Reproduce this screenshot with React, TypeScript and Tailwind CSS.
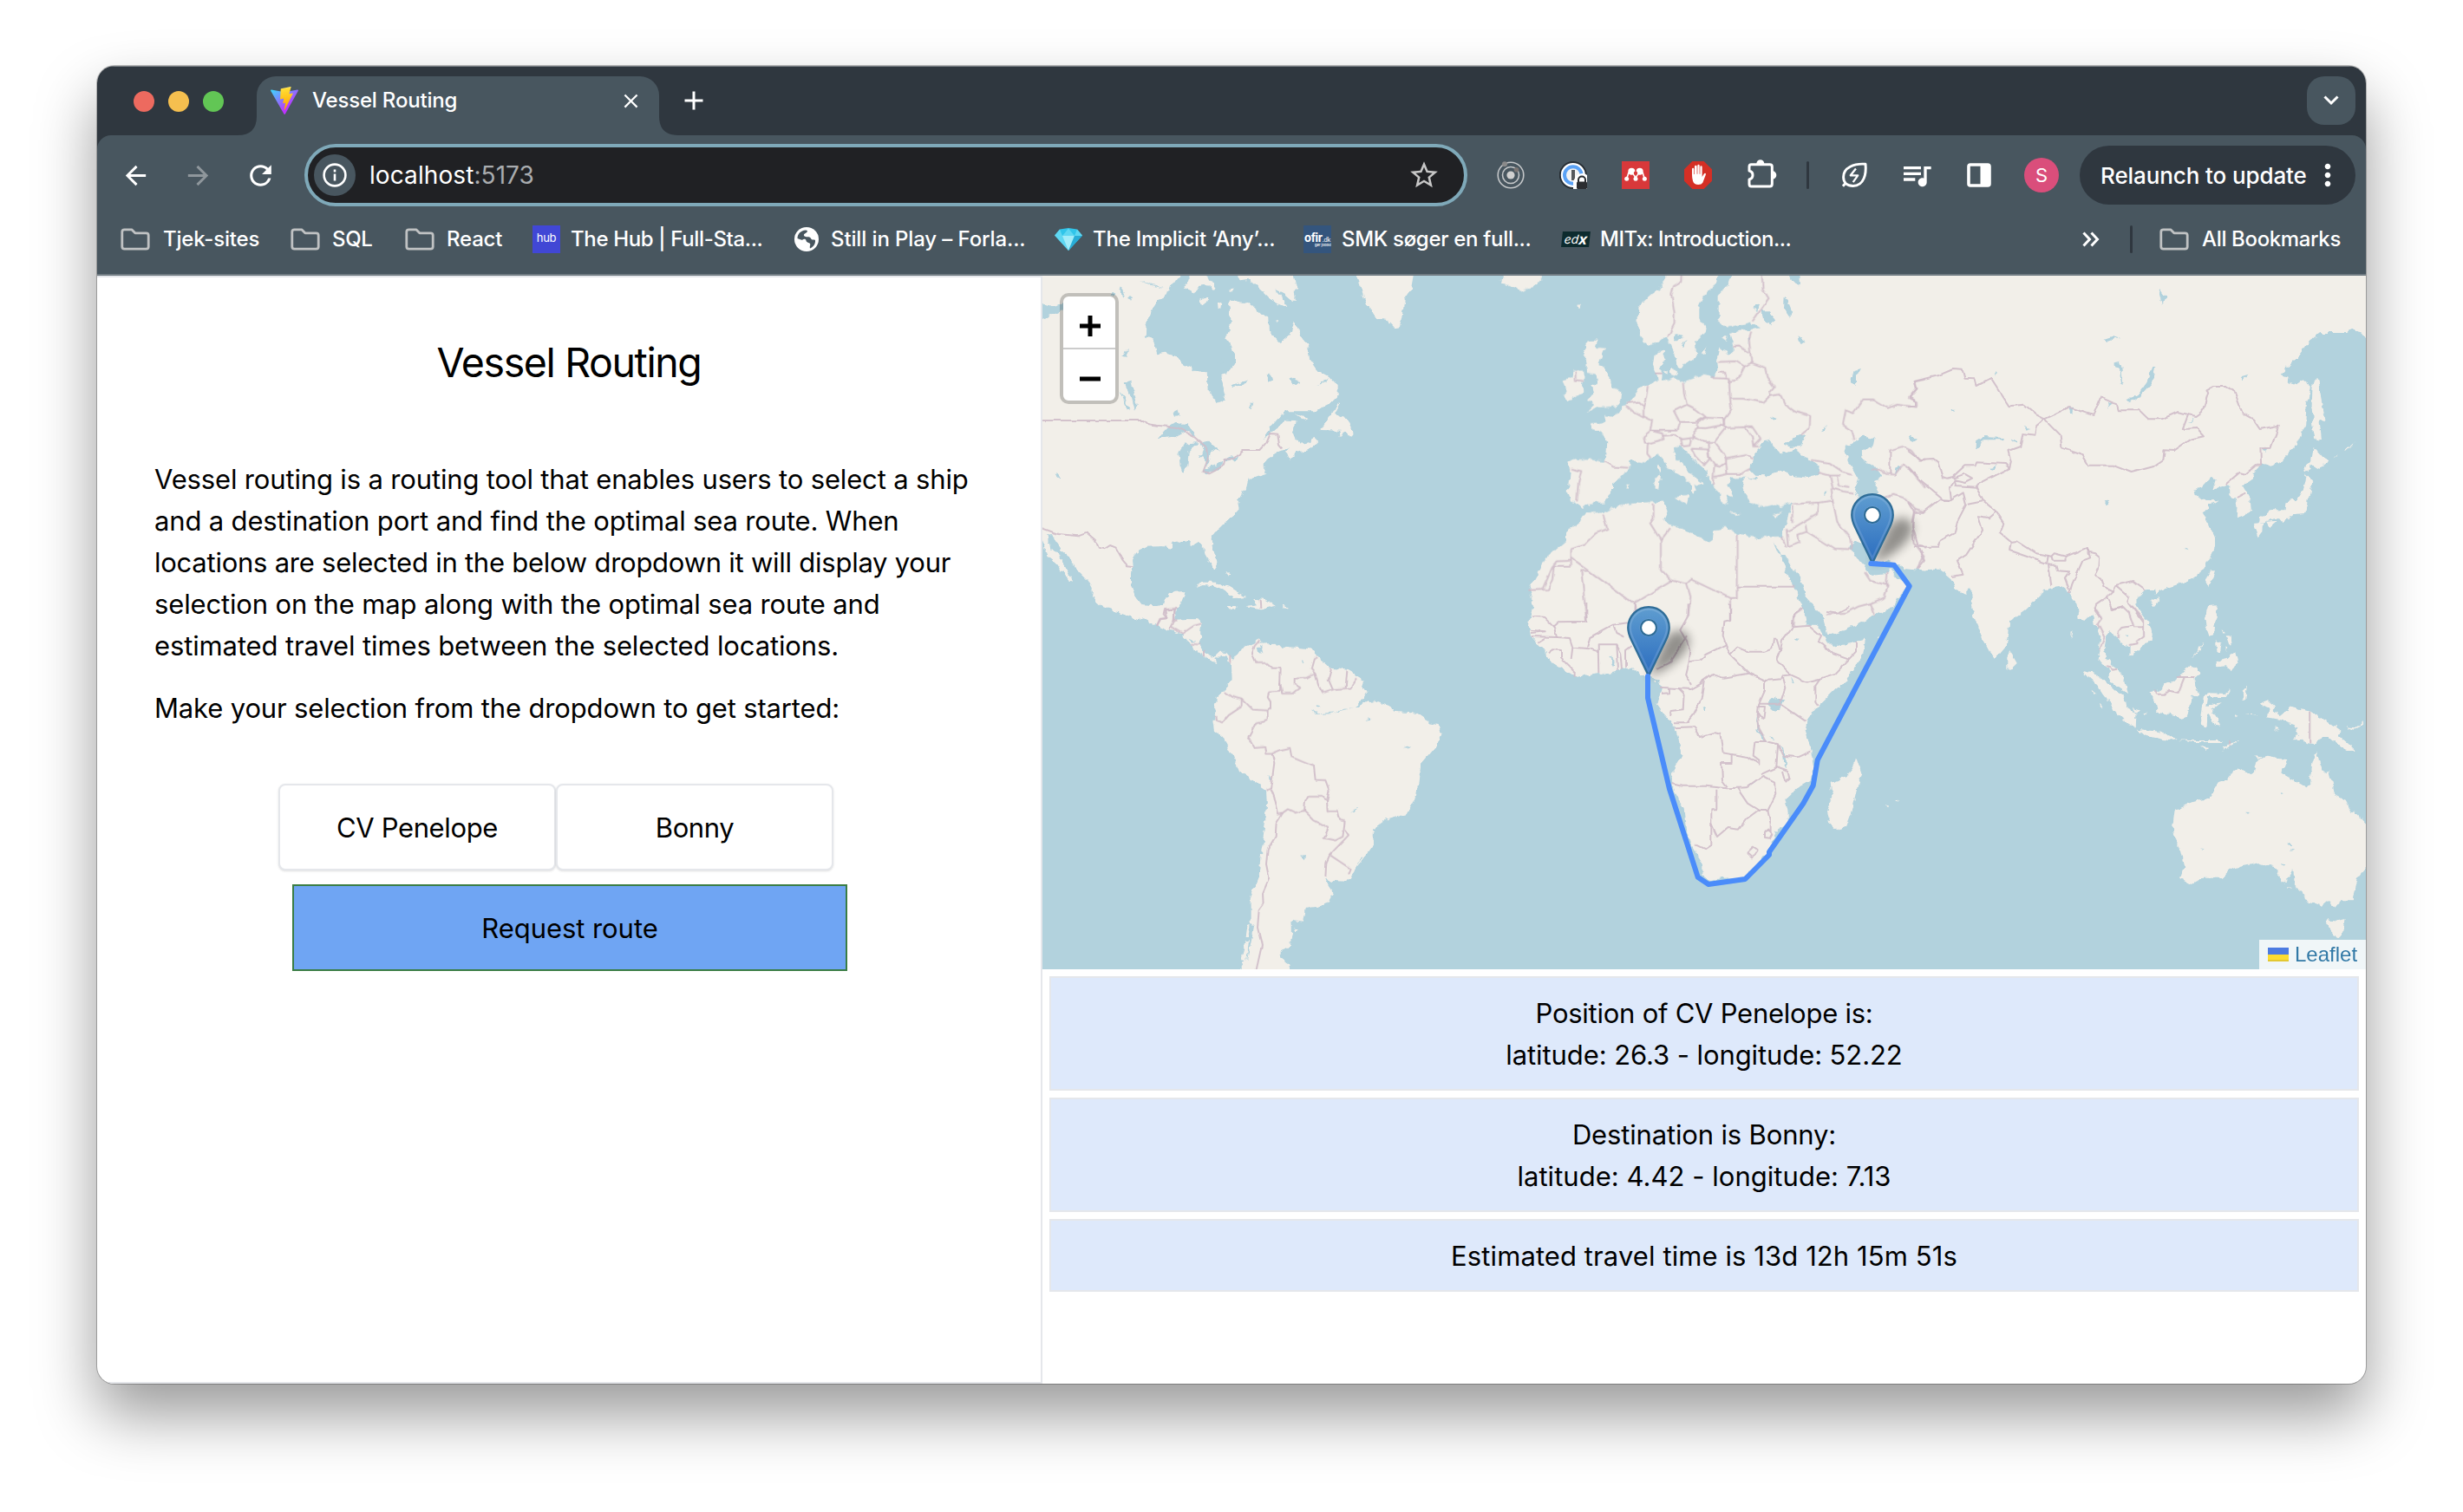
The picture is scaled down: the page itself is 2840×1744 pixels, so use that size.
import type { ReactNode } from "react";
import {
  MdAdd,
  MdArrowBack,
  MdArrowForward,
  MdClose,
  MdMoreVert,
  MdQueueMusic,
  MdRefresh,
  MdStarOutline,
} from "react-icons/md";

/* ------------------------------------------------------------------ map */

type Sheet = {
  at: string;
  land: string[];
  water: string[];
  borders: string[];
};

const northAmerica: Sheet = {
  at: "translate(1200 320) scale(.33333)",
  land: [
    "-30,-40 485,-40 480,0 470,15 445,25 432,65 405,80 380,120 365,160 362,205 388,212 403,265 430,260 468,270 490,298 530,320 575,325 578,390 612,435 632,425 638,400 622,340 650,328 672,300 672,265 655,230 640,212 655,175 658,140 648,90 660,80 700,90 722,84 740,105 765,130 790,140 792,190 830,225 862,200 877,155 900,200 925,240 930,285 955,320 1000,345 1028,375 1028,410 1010,428 985,440 955,463 900,463 845,463 815,495 790,525 775,548 815,515 850,494 880,495 880,508 868,530 880,560 900,578 930,570 945,548 957,572 925,595 880,608 858,630 850,610 860,592 830,598 785,625 772,650 783,678 745,688 718,700 712,725 700,740 690,760 682,775 686,805 668,825 640,845 600,885 590,905 592,930 605,960 612,1000 602,1014 585,990 568,960 565,930 545,920 525,925 510,912 480,912 450,918 455,935 420,930 365,932 330,950 318,975 320,1000 312,1020 312,1065 330,1110 350,1135 400,1138 425,1130 440,1095 465,1085 497,1083 490,1110 480,1135 470,1150 465,1185 500,1182 545,1184 562,1200 400,1200 360,1180 335,1185 270,1160 215,1140 180,1105 183,1085 165,1050 120,1005 100,970 72,945 50,910 40,888 22,890 30,930 65,965 85,1005 112,1052 98,1048 70,1015 55,990 25,965 18,940 6,910 -30,900",
    "670,-40 680,0 690,10 720,5 760,40 790,70 825,90 853,103 840,75 810,40 840,55 870,80 882,80 875,50 885,35 868,-40",
    "510,-40 512,15 495,38 528,57 545,30 580,25 600,45 605,36 585,10 560,-40",
    "548,78 580,65 578,82 560,96",
    "612,90 625,86 622,108 614,112",
    "650,45 670,35 668,50",
    "1080,-40 1105,30 1125,85 1160,140 1200,148 1225,175 1242,172 1250,130 1260,75 1280,45 1295,-40",
    "1028,430 1005,475 968,528 1040,530 1030,550 1055,535 1075,555 1082,535 1062,490 1035,485 1018,470 1030,435",
    "883,473 928,488 915,494",
    "538,1075 560,1055 610,1055 650,1070 712,1108 665,1110 640,1085 600,1068 560,1065",
    "735,1112 780,1116 812,1136 765,1147 708,1138 750,1132",
    "645,1138 676,1143 655,1150",
    "835,1136 859,1142 835,1147",
    "640,1015 655,1030 650,1040",
    "810,152 820,150 818,162",
  ],
  water: [
    "408,555 440,520 470,500 510,505 535,545 500,532 470,548 430,555",
    "478,605 500,575 545,570 512,600 508,650 490,677 482,650",
    "545,568 590,570 617,605 592,598 582,640 570,655 565,615 548,628 565,590",
    "560,668 625,640 632,650 575,682",
    "630,628 682,616 672,634 635,638",
    "290,365 312,360 335,440 327,458 308,405",
    "272,395 290,415 308,462 300,462",
    "-30,70 20,95 45,98 78,90 78,112 40,130 0,145 -30,140",
    "458,468 472,460 478,478 462,485",
    "50,675 62,682 68,698 55,690",
    "860,352 880,345 895,362 880,375 865,368",
    "952,372 1000,348 985,362",
    "780,340 795,330 803,350 790,362",
    "655,372 720,355 700,372 665,378",
    "720,450 735,432 728,455",
    "283,272 302,245 300,275",
    "238,60 252,48 262,60 250,68",
    "612,292 632,280 635,295 620,302",
    "340,12 375,20 430,40 400,32",
    "275,30 290,50 282,72",
    "303,65 318,72 312,84",
    "765,560 792,528 850,492 800,535",
  ],
  borders: [
    "0,495 358,495 372,508 400,512 470,518 520,545 573,590 578,630 562,672 580,676 630,650 635,630 672,626 700,597 760,597 780,575 795,540 820,542 825,580 835,592",
    "0,866 60,888 130,895 160,884 190,910 200,935 220,940 240,927 260,935 285,980 300,997 320,1000",
    "470,1140 465,1148 428,1150 425,1165 438,1180 415,1182 402,1205",
    "460,1148 460,1190",
    "758,1117 760,1146",
  ],
};

const europe: Sheet = {
  at: "translate(1700 320) scale(.33333)",
  land: [
    "90,25 100,-40 235,-40 233,5 215,25 160,47 120,30",
    "395,220 428,217 418,245 450,248 430,300 450,310 470,350 480,385 508,395 505,425 490,445 430,450 387,467 415,440 390,425 412,402 403,375 430,365 425,335 390,330 388,290 373,265 385,240",
    "343,325 378,325 383,345 372,368 376,400 322,430 303,412 320,395 308,355 340,345",
    "680,-40 650,30 600,70 568,100 565,170 575,205 605,236 640,220 665,200 680,240 700,285 705,315 722,315 727,300 755,290 768,265 765,225 800,190 803,175 775,145 775,105 795,60 840,20 850,-40",
    "900,-40 880,25 845,60 845,150 875,172 960,155 990,175 920,185 885,195 897,230 895,262 882,265 850,245 840,290 845,325 825,345 790,338 720,362 690,345 660,358 632,362 630,332 618,305 622,270 657,248 655,285 640,315 650,335 648,360 632,362 575,380 555,410 520,440 500,470 480,485 450,480 455,500 400,508 410,525 440,535 460,570 455,635 345,628 325,640 332,670 328,720 320,740 330,772 350,775 375,798 395,782 445,778 480,740 480,715 510,690 535,665 535,635 560,635 590,640 610,625 635,612 655,625 665,655 720,690 750,715 755,750 768,735 760,715 795,712 740,670 695,620 690,590 712,580 735,605 770,640 805,670 812,705 830,725 850,745 850,770 878,785 872,755 895,760 875,720 890,695 937,692 930,720 950,775 1000,795 1040,785 1060,795 1095,780 1085,830 1065,895 980,902 910,888 870,865 825,875 822,905 808,915 770,895 720,868 680,855 655,840 668,810 655,775 570,780 500,790 450,815 385,812 365,845 315,885 315,915 250,970 190,1080 205,1140 190,1200 1560,1200 1570,-40",
    "625,690 645,685 640,732 626,735",
    "630,655 642,648 640,680",
    "692,760 742,755 735,785",
    "885,812 925,818 900,822",
    "1030,820 1065,812 1045,828",
    "678,312 700,322 692,340 678,335",
    "655,322 668,320 668,335",
    "788,260 802,238 798,262",
    "855,210 875,205 870,222",
    "520,722 535,715 535,725",
    "355,92 370,90 360,110",
  ],
  water: [
    "953,665 965,620 985,595 1000,565 1025,560 1030,580 1060,610 1105,595 1150,625 1190,655 1188,680 1160,690 1110,685 1060,668 1010,685 970,683",
    "1075,575 1105,555 1150,543 1130,585 1090,588",
    "943,695 975,690 978,700",
    "1280,605 1290,580 1310,575 1345,548 1385,555 1380,580 1355,600 1340,605 1355,640 1380,650 1415,690 1383,705 1402,740 1380,765 1330,765 1315,740 1328,700 1295,640",
    "1060,960 1075,960 1130,1050 1150,1110 1205,1170 1215,1205 1150,1205 1140,1150 1110,1080 1085,1040",
    "1033,915 1055,950 1068,968 1050,955",
    "1300,930 1315,915 1350,925 1370,975 1410,988 1440,975 1455,990 1490,1005 1570,1014 1570,1205 1320,1205 1380,1172 1450,1140 1470,1105 1500,1065 1460,1035 1438,1008 1420,1030 1370,1035 1355,1005 1325,970",
    "995,115 1020,115 1042,150 1025,170 1000,150",
    "1070,65 1085,78 1102,120 1090,137 1068,105",
    "1075,-40 1125,-40 1128,28 1095,12",
    "690,220 695,195 722,200 705,220",
    "720,240 738,215 725,245",
    "1120,205 1145,220 1130,232",
    "945,205 955,205 952,230",
    "965,100 985,90 975,125",
    "1305,360 1312,325 1335,318 1320,345 1320,375",
    "1025,480 1048,490 1038,495",
    "1200,535 1220,512 1215,530",
    "1505,555 1530,560 1515,570",
    "1455,662 1480,652 1460,678",
    "1205,740 1220,740 1215,750",
  ],
  borders: [
    "718,-40 715,15 690,30 682,60 692,120 692,160 670,205",
    "993,-40 998,40 1018,72 985,120 962,152",
    "958,190 950,215 955,260 958,295 1005,312 1012,345 1037,378 1018,400 1022,410",
    "895,240 915,238 950,258",
    "842,292 905,290 935,308 958,295",
    "935,308 910,355 880,360",
    "820,348 870,350 868,330 845,328",
    "870,350 885,352 882,370 885,425 890,455 865,490 862,510",
    "885,420 930,420 1000,432 1022,410 1058,405 1075,440 1110,465 1162,480 1160,520 1130,545",
    "722,362 725,400 735,440 690,462 710,500 765,500 800,482 765,455 735,440",
    "770,505 800,485 860,488 865,510 800,522 770,520 770,505",
    "710,500 700,530 610,530",
    "585,480 615,495 608,530",
    "650,548 690,545 720,560 760,555 762,525 770,520",
    "600,375 595,410 585,445 585,485 550,465 525,442",
    "530,435 570,430 585,445",
    "610,530 585,550 590,575 600,575 655,560 650,540 610,530",
    "600,575 598,610 610,625",
    "762,550 800,570 830,570 870,520 850,508",
    "870,520 935,518 960,550 965,585 985,585",
    "935,515 960,515 990,560 965,585",
    "830,570 865,615 870,628 940,615 965,628",
    "870,628 875,680 925,680 955,662",
    "750,592 808,595 812,630 795,650 765,620 750,592",
    "715,560 720,585 745,582 750,560",
    "808,570 812,620 830,650 825,715",
    "830,650 850,655 870,640",
    "830,690 875,680",
    "450,638 480,655 535,658",
    "333,662 370,670 360,710 355,775",
    "625,332 650,332",
    "350,325 350,355 375,358",
    "1315,562 1305,530 1275,510 1285,460 1310,470 1345,422 1380,422 1430,452 1460,440 1530,448 1530,430 1503,418 1530,385 1525,360 1560,352",
    "1165,632 1230,642 1270,670 1305,680",
    "1190,675 1230,685 1270,685",
    "1230,685 1240,730 1275,740 1310,745",
    "1255,690 1260,720 1300,725",
    "1375,665 1400,662 1425,680 1455,682 1480,650 1505,660 1530,690 1560,725",
    "1438,680 1438,598 1480,585 1515,600 1540,632 1560,630",
    "1420,760 1450,752 1490,765 1525,800 1560,812",
    "1525,800 1515,840 1520,920 1560,935",
    "1520,920 1555,965 1532,1010",
    "1095,785 1195,778 1240,772 1235,730",
    "1190,780 1185,820 1100,870 1080,880",
    "1100,790 1100,850",
    "1240,772 1255,845 1300,900 1305,945",
    "1145,855 1150,880 1245,938 1300,940",
    "1080,870 1085,930 1125,915 1120,890 1150,880",
    "1065,900 1078,935",
    "1215,1165 1290,1160 1330,1138 1370,1128 1385,1170",
    "1370,1128 1418,1108 1430,1065 1370,1050 1350,1020",
    "1425,1070 1430,1020",
    "908,890 908,1070 1110,1070",
    "908,1070 908,1108 885,1110 750,1045 735,1060 680,1048 645,1010 645,910 675,870",
    "645,910 608,850 620,830 620,782",
    "445,820 460,870 420,885 380,925 335,940 335,970 545,1125 555,1125 685,1048",
    "335,970 335,998 275,998 270,1045 255,1080 190,1082",
    "335,980 285,982 270,1000 235,1080",
    "395,1015 370,1015 388,1188",
    "555,1125 555,1170",
    "735,1060 748,1105 740,1170",
    "885,1110 885,1185",
    "1105,1205 1108,1165 1135,1145",
  ],
};

const asia: Sheet = {
  at: "translate(2200 320) scale(.34439 .33333)",
  land: [
    "-15,-40 1600,-40 1600,215 1540,208 1500,182 1485,180 1470,192 1380,192 1350,215 1300,280 1248,335 1275,345 1270,360 1300,370 1320,355 1350,380 1335,440 1330,510 1300,580 1250,635 1215,650 1185,640 1160,670 1155,695 1120,720 1145,765 1150,810 1100,832 1102,790 1095,762 1078,755 1078,720 1065,718 1020,735 1030,700 1015,693 985,725 955,738 960,750 985,770 1040,772 1010,790 985,820 1005,850 1028,900 1028,930 990,1010 940,1050 895,1065 850,1080 830,1100 825,1080 795,1080 765,1110 765,1140 812,1200 625,1200 615,1160 590,1185 572,1180 565,1130 540,1095 525,1068 450,1080 445,1100 395,1150 340,1190 338,1200 235,1200 225,1170 215,1130 212,1070 190,1097 160,1080 145,1040 110,1010 0,1012 -15,1012",
    "1355,365 1370,348 1380,400 1398,495 1378,492 1385,560 1365,570 1358,530 1352,450",
    "1358,588 1385,620 1412,635 1375,662 1350,650 1330,674 1325,655 1350,635",
    "1335,685 1357,710 1337,770 1335,815 1290,820 1255,850 1240,830 1175,852 1180,830 1220,805 1262,805 1265,775 1300,770 1325,730",
    "1155,855 1188,850 1185,880 1172,898",
    "1200,845 1235,842 1210,865",
    "1010,1015 1028,1015 1008,1072 997,1050",
    "808,1118 845,1108 825,1140",
    "1005,1138 1032,1135 1037,1170 1020,1215 998,1215",
    "1420,625 1440,610 1435,618",
    "1460,600 1498,568 1475,595",
  ],
  water: [
    "820,308 829,310 815,370 770,420 735,430 728,424 765,410 800,360",
    "228,590 230,565 250,552 322,555 320,562 250,562 238,590",
    "270,658 300,652 290,664",
    "658,772 670,770 678,784 666,782",
    "690,295 708,290 714,305 722,375 714,370 708,312 690,305",
    "655,215 690,203 714,212 690,208 670,225",
    "838,45 868,65 850,95 845,70",
    "535,455 552,452 550,468 540,468",
    "668,432 678,430 672,455",
    "385,515 410,525 400,530",
    "345,555 370,570 362,575",
    "1118,345 1140,338 1122,358",
    "1192,590 1206,592 1198,606",
    "945,500 958,485 952,500",
    "5,555 28,560 15,568",
    "290,328 300,332 292,340",
    "145,458 158,458 150,466",
    "928,935 940,938 932,945",
  ],
  borders: [
    "0,448 25,445 25,430 5,415 30,385 22,360 100,340 150,318 182,320 190,350 222,352 228,375 278,348 338,445 390,440 430,475 458,490",
    "458,490 540,450 620,477 645,415 700,440 705,460 775,460 805,490 850,490 905,465 940,475 965,480 985,465 1005,400 1000,388 1025,375 1060,375 1092,392 1120,470 1155,490 1178,525 1242,512 1215,590 1180,592 1182,650 1165,650",
    "938,475 920,525 965,522 990,550 945,560 890,600 858,598 855,630 820,655 748,675 685,650 605,650 585,615 515,590 510,545 458,490",
    "458,490 428,515 425,545 385,540 375,585 335,600 345,640 340,660 325,645 230,640 225,652 190,652 150,690 130,695 115,690 100,640 85,627 40,630 0,598",
    "340,660 235,715 228,725 160,720 155,700 190,708 215,695 190,680 150,695",
    "0,655 40,700 110,760 115,770 145,770 140,730 155,705",
    "145,770 185,745 195,785 165,845 155,885 110,910 100,932 20,932",
    "0,778 20,812 50,812 105,768 145,772",
    "20,812 15,860 35,930 55,980 32,1010",
    "228,725 250,770 295,810 320,850 310,885 345,915 340,945 465,990 470,960",
    "345,915 365,912 430,955 480,965 490,955 530,965 600,935 610,970 585,980 550,1060 540,1095",
    "480,965 485,980 530,980 530,965",
    "200,785 250,775",
    "295,810 270,832 235,825 250,875 195,960 165,980 185,1028 145,1035",
    "470,990 480,1065",
    "470,995 495,995 500,1015 540,1018 525,1040 540,1080",
    "600,935 605,950 625,955 642,970 640,1000 625,1030 645,1040 655,1070 685,1085 695,1065 755,1050 795,1080",
    "685,1085 665,1105 630,1130 625,1150 645,1180",
    "665,1105 685,1150 720,1140",
    "695,1065 740,1105 735,1120 790,1195",
    "1065,715 1110,675 1130,680 1165,650",
    "1100,762 1130,745",
  ],
};

const southAmerica: Sheet = {
  at: "translate(1200 700) scale(.33333)",
  land: [
    "215,-3 270,20 335,45 360,38 400,65 440,80 485,92 520,130 525,145 560,165 590,185 610,192 603,178 625,165 645,172 650,190 660,200 662,255 640,285 612,310 600,350 608,385 595,395 600,425 630,450 680,545 690,570 780,632 783,690 775,760 760,870 755,930 725,1010 725,1090 738,1105 730,1150 715,1220 700,1230 710,1290 870,1290 858,1235 830,1215 830,1195 860,1175 870,1130 868,1082 910,1088 918,1040 960,1038 995,1025 1012,990 995,965 985,942 1010,948 1055,950 1090,905 1150,825 1152,770 1200,735 1265,718 1300,655 1315,545 1370,480 1385,440 1375,405 1345,400 1300,368 1222,362 1210,345 1155,325 1110,330 1128,298 1105,245 1060,218 1005,212 960,175 935,145 880,140 815,135 805,125 760,128 758,108 735,125 690,145 665,185 640,155 620,155 600,175 570,160 550,130 555,60 540,43 465,45 470,-3",
    "645,-3 678,-3 660,8",
    "715,1105 725,1100 718,1140 710,1140",
    "710,1160 720,1155 712,1225 692,1222",
    "690,1250 712,1235 705,1290 690,1290",
    "880,1110 893,1118 886,1128",
  ],
  water: [
    "752,140 762,135 768,155 758,162",
    "900,860 918,858 915,874",
    "787,582 802,590 800,604",
    "903,185 912,183 908,202",
    "1105,865 1115,862 1098,890",
    "515,110 530,118 528,128",
    "950,342 968,346 955,352",
    "1255,487 1282,477 1270,488",
    "1075,710 1094,694 1085,708",
    "1128,385 1138,390 1134,398",
    "1085,350 1112,318 1130,320 1100,345",
    "940,358 960,370 1035,362 1085,350 1040,358 1000,370 950,372",
  ],
  borders: [
    "465,5 430,10 435,38 412,42 402,65",
    "460,8 458,50",
    "445,78 458,50 475,45",
    "450,68 490,92 530,65 558,58",
    "520,128 550,130",
    "567,150 567,172",
    "655,170 655,192",
    "760,112 740,135 732,160 745,195 780,195 800,212 830,212 828,290",
    "828,260 835,300 870,300 895,280 878,268 878,248 920,245 950,232 935,215 945,180 958,175",
    "950,232 960,270 975,298 1015,285 1075,280 1095,250",
    "1005,215 995,250 1010,285",
    "1060,220 1055,280",
    "638,295 665,312 695,320 730,355 785,358 785,390 745,400 718,450 740,488 775,485 778,508 800,508 830,495 862,488 868,520 945,552 950,598 985,600 998,635 990,670 975,657 925,657 915,675 912,705",
    "785,358 795,355 795,325 785,310 790,292 828,290",
    "695,320 695,345 650,375 630,400 608,392 608,380",
    "800,508 808,540 800,600 795,625 782,632",
    "795,625 812,670 822,715 838,712 855,700 880,712 912,705 945,738 995,765 980,800 1020,808 1045,795 1052,742 1035,738 1028,705 992,705 990,670",
    "1052,770 1065,790 1000,858 1070,905 1062,925",
    "1000,858 988,885 985,935",
    "838,712 815,750 812,795 785,840 780,890 790,940 768,990 770,1030 755,1050 750,1110 765,1170 745,1260",
  ],
};

const africa: Sheet = {
  at: "translate(1700 700) scale(.33333)",
  land: [
    "205,-3 188,65 195,100 220,130 250,160 265,190 300,212 350,242 430,228 445,237 550,208 575,240 610,240 640,252 648,280 632,335 660,375 690,410 708,460 715,515 695,550 683,590 690,640 725,700 732,770 750,825 790,890 790,930 815,948 860,938 930,935 975,900 1015,850 1045,775 1085,750 1085,710 1075,665 1120,625 1165,600 1175,550 1168,500 1145,430 1150,395 1190,345 1250,285 1290,255 1340,170 1354,112 1320,122 1240,138 1220,120 1195,75 1160,45 1140,-3",
    "1190,-3 1210,40 1222,100 1270,85 1370,45 1450,-3",
    "1322,525 1340,580 1328,610 1310,690 1285,758 1255,772 1228,750 1220,700 1240,660 1232,610 1280,590 1305,560",
    "1422,684 1434,688 1428,694",
    "1456,670 1467,668 1462,678",
    "625,258 633,258 628,266",
    "1392,102 1402,100 1396,106",
  ],
  water: [
    "1020,325 1045,315 1072,322 1060,345 1045,362 1022,352",
    "1060,480 1068,488 1080,560 1070,545",
    "978,370 985,420 1008,462 1000,462 980,425",
    "1110,108 1124,110 1116,118",
    "945,618 970,602 955,618",
    "465,172 485,185 482,208",
    "1092,240 1108,270 1098,265",
    "1020,445 1040,462 1028,458",
    "1038,775 1060,762 1045,785",
    "788,345 798,352 793,360",
  ],
  borders: [
    "205,33 240,35 275,70 285,105 330,108 340,140 400,145 430,155",
    "388,-12 388,50 290,52 272,68",
    "195,80 245,85 195,90",
    "195,102 285,105",
    "220,125 245,110",
    "255,160 270,148 300,150 300,175 315,190 350,225 350,242",
    "340,140 335,180",
    "430,228 428,130 490,130 495,215",
    "510,215 505,160 490,130",
    "525,212 525,150 545,135",
    "390,140 400,105 480,62 530,55",
    "480,62 490,90 520,105",
    "555,-12 553,30",
    "740,-12 740,30 712,80 735,120 745,150 740,190 730,230 750,270",
    "735,100 680,190 630,215",
    "740,190 780,185 800,165 870,130 885,165 950,230",
    "885,-12 885,45 865,50 860,100 870,130",
    "885,165 910,140 945,155 1005,155 1030,145 1035,110 1045,110 1058,150 1045,182 1095,235",
    "950,230 860,245 820,232 795,250 785,265 750,285 645,278",
    "950,230 1005,255 1060,250 1070,238 1095,235 1150,260 1195,248 1250,230 1320,155 1320,120",
    "1195,248 1180,270 1180,330 1190,345",
    "1058,150 1065,115 1100,70 1105,25 1135,0",
    "1100,70 1160,65 1200,100 1190,120 1205,130",
    "1205,130 1240,162 1295,182",
    "645,300 675,298 675,280",
    "705,280 725,300 722,355 680,360 675,380",
    "795,250 785,320 755,375 735,400 690,400",
    "692,418 760,415 780,450 830,435 850,440 860,505 890,510 890,540 855,540 858,600 875,622",
    "685,612 720,620 800,620 875,628 945,625",
    "838,632 838,700 820,700 820,825 800,838 762,820",
    "820,750 840,795 875,765 915,770 940,735 980,705 1015,705 1042,650 1038,605 1000,585 945,625",
    "910,628 945,680 985,705",
    "1015,705 1025,750 1025,780",
    "1005,255 1005,290 985,335 980,370 985,420 1010,465",
    "985,335 1058,335 1145,395",
    "1058,335 1075,280 1065,245",
    "890,510 950,520 985,545 985,530 965,515 970,465 1010,465 1050,475 1045,555 990,580",
    "1050,475 1070,515 1120,520 1165,500",
    "1045,555 1085,570 1090,590 1075,605 1065,570",
    "942,852 965,830 980,840 960,868 942,852",
    "1005,780 1018,770 1030,785 1022,800 1005,798 1005,780",
    "980,345 1005,345 1000,390 980,365",
    "1215,15 1260,20 1300,0",
  ],
};

const oceania: Sheet = {
  at: "translate(2200 700) scale(.34439 .33333)",
  land: [
    "215,-3 225,45 250,110 275,160 292,182 330,135 338,90 340,45 400,-3",
    "340,150 365,195 345,215 332,210 332,180",
    "565,-3 572,42 600,38 618,20 630,60 648,110 640,150 635,175 650,195 672,215 680,260 738,300 722,240 700,215 685,205 660,170 655,140 660,105 675,85 700,105 720,130 745,140 745,170 775,145 815,120 818,90 795,40 765,-3",
    "585,222 625,230 680,275 725,315 730,345 762,370 760,415 740,412 690,360 665,315 635,275",
    "765,422 840,432 905,455 870,462 790,445",
    "812,290 850,290 860,268 890,260 945,200 980,230 960,245 962,280 975,300 950,310 935,380 910,388 895,375 835,365 830,335 815,310",
    "980,375 990,310 1005,298 1065,300 1080,290 1068,312 1005,312 1000,345 1048,330 1018,355 1045,410 1030,408 1010,370 1000,372 998,412 985,410",
    "1175,335 1205,322 1228,340 1228,365 1245,378 1285,345 1345,362 1420,405 1452,430 1440,445 1500,500 1450,485 1410,450 1385,450 1370,475 1340,472 1320,458 1288,460 1308,440 1290,405 1245,390 1205,382 1210,350",
    "1465,415 1500,418 1525,392 1528,402 1495,425",
    "1048,500 1075,472 1110,463 1062,492",
    "908,460 945,462 1050,462 1048,468 945,468",
    "978,480 1008,490 995,495",
    "1005,-3 1032,-3 1030,30 1012,60 1025,70 1022,100 1010,105 1000,75 993,40",
    "1028,190 1070,180 1095,155 1104,190 1085,220 1065,205 1035,208",
    "1030,115 1050,125 1045,155 1035,150",
    "1065,100 1080,100 1085,130 1075,130",
    "1050,75 1065,90 1055,92",
    "1060,140 1072,140 1065,155",
    "948,178 988,125 980,145",
    "1120,290 1135,275 1130,320 1122,320",
    "1128,372 1172,378 1150,372",
    "1095,372 1112,378 1100,382",
    "1230,410 1238,420 1230,435",
    "752,348 775,355 762,368",
    "790,362 800,366 794,372",
    "617,290 630,300 622,302",
    "642,335 652,345 645,348",
    "545,85 550,85 543,112",
    "1165,535 1185,520 1205,515 1270,530 1250,575 1335,625 1345,610 1355,540 1367,500 1388,565 1410,575 1430,650 1465,670 1485,710 1500,715 1540,760 1600,790 1600,850 1540,895 1510,930 1490,1000 1490,1015 1450,1015 1430,1040 1408,1018 1385,1037 1330,1015 1320,985 1295,965 1290,910 1275,940 1255,955 1225,900 1180,885 1110,900 1075,910 1050,935 990,935 950,960 912,938 925,900 912,845 885,770 893,705 940,680 1010,660 1035,615 1045,608 1070,600 1080,575 1112,557 1130,575 1155,575",
    "1162,518 1185,515 1175,524",
    "1402,1080 1430,1088 1462,1080 1455,1130 1438,1147 1415,1120",
    "1268,972 1290,975 1275,978",
  ],
  water: [
    "1130,710 1148,711 1138,716",
    "1270,815 1288,820 1280,828",
    "1278,838 1290,842 1280,845",
    "1250,885 1265,890 1255,894",
    "980,838 992,840 985,845",
    "722,92 738,100 730,104",
    "1248,643 1257,645 1250,649",
  ],
  borders: [
    "622,0 648,40 635,60 658,105 642,150",
    "680,0 682,12 720,0 740,20 755,65 715,72 705,85 705,105",
    "750,-3 790,45 790,100 765,120 765,130 740,135",
    "755,70 790,70",
    "665,205 680,208 685,218 700,215",
    "825,290 830,302 860,302 875,290 905,297 925,245",
    "900,243 960,243",
    "1345,362 1345,472",
    "1075,465 1080,480",
  ],
};

const sheets = [northAmerica, southAmerica, africa, europe, oceania, asia];

const route =
  "1900,780 1900,805 1925,910 1957.7,1011.7 1970,1020 2012.3,1014 2040,986 2040,982.7 2079.3,926.7 2090.7,906 2095.7,876.7 2201.7,676 2184,651.7 2157.3,650";

function Marker({ x, y }: { x: number; y: number }) {
  return (
    <g transform={`translate(${x - 25} ${y - 80}) scale(2)`}>
      <path d="M12.5 40.5 22 19q7-8 12-3t-4 14q-7 7-17.5 10.5z" fill="#000" opacity=".4" filter="url(#soft)" />
      <path
        d="M12.5.6C5.9.6.6 5.9.6 12.5c0 2.6.9 5 2 7.3L12.5 40.4l9.9-20.6c1.1-2.3 2-4.7 2-7.3C24.4 5.9 19.1.6 12.5.6z"
        fill="url(#pin)"
        stroke="#2e6c97"
        strokeWidth="1.1"
      />
      <path
        d="M12.5 1.9C6.6 1.9 1.9 6.6 1.9 12.5c0 2.4.8 4.6 1.9 6.8L12.5 37.5l8.7-18.2c1.1-2.2 1.9-4.4 1.9-6.8C23.1 6.600 18.4 1.9 12.5 1.9z"
        fill="none"
        stroke="#fff"
        strokeOpacity=".13"
        strokeWidth="1.2"
      />
      <circle cx="12.5" cy="12.5" r="5.3" fill="#fff" fillOpacity=".15" />
      <circle cx="12.5" cy="12.5" r="4.5" fill="#fff" stroke="#2e6c97" strokeWidth="1.1" />
    </g>
  );
}

function WorldMap() {
  return (
    <svg viewBox="1202 318 1526 800" className="block h-[800px] w-[1526px]">
      <defs>
        <filter id="coast" filterUnits="userSpaceOnUse" x="1180" y="300" width="1570" height="840">
          <feTurbulence type="fractalNoise" baseFrequency=".13" numOctaves="2" seed="4" />
          <feDisplacementMap in="SourceGraphic" scale="7" xChannelSelector="R" yChannelSelector="G" result="d" />
          <feGaussianBlur in="d" stdDeviation=".6" />
        </filter>
        <filter id="frontier" filterUnits="userSpaceOnUse" x="1180" y="300" width="1570" height="840">
          <feTurbulence type="fractalNoise" baseFrequency=".1" numOctaves="1" seed="4" />
          <feDisplacementMap in="SourceGraphic" scale="5" xChannelSelector="R" yChannelSelector="G" result="d" />
          <feGaussianBlur in="d" stdDeviation=".4" />
        </filter>
        <filter id="soft" x="-40%" y="-40%" width="180%" height="180%">
          <feGaussianBlur stdDeviation="2.8" />
        </filter>
        <linearGradient id="pin" x1="0" y1="0" x2="0" y2="1">
          <stop offset="0" stopColor="#5f9dd0" />
          <stop offset="1" stopColor="#2a6cbf" />
        </linearGradient>
      </defs>
      <rect x="1180" y="300" width="1570" height="840" fill="#b2d2dd" />
      <g filter="url(#coast)">
        {sheets.map((s) => (
          <g key={s.at} transform={s.at} fill="#f2efe9">
            {s.land.map((p) => (
              <polygon key={p} points={p} />
            ))}
          </g>
        ))}
        {sheets.map((s) => (
          <g key={s.at} transform={s.at} fill="#b2d2dd">
            {s.water.map((p) => (
              <polygon key={p} points={p} />
            ))}
          </g>
        ))}
      </g>
      <g filter="url(#frontier)">
        {sheets.map((s) => (
          <g key={s.at} transform={s.at} fill="none" stroke="#cfbdc9" strokeOpacity=".9" strokeWidth="6" strokeLinejoin="round">
            {s.borders.map((p) => (
              <polyline key={p} points={p} />
            ))}
          </g>
        ))}
      </g>
      <Marker x={2159} y={649} />
      <Marker x={1901} y={779} />
      <polyline points={route} fill="none" stroke="#4a8cfa" strokeWidth="6" strokeLinecap="round" strokeLinejoin="round" />
    </svg>
  );
}

/* --------------------------------------------------------------- chrome */

function ViteLogo() {
  return (
    <svg viewBox="0 0 256 257" className="size-8">
      <defs>
        <linearGradient id="va" x1="-.8%" x2="57.6%" y1="7.6%" y2="78.4%">
          <stop offset="0" stopColor="#41d1ff" />
          <stop offset="1" stopColor="#bd34fe" />
        </linearGradient>
        <linearGradient id="vb" x1="43.4%" x2="50.3%" y1="2.2%" y2="89%">
          <stop offset="0" stopColor="#ffea83" />
          <stop offset=".083" stopColor="#ffdd35" />
          <stop offset="1" stopColor="#ffa800" />
        </linearGradient>
      </defs>
      <path
        fill="url(#va)"
        d="M255.153 37.938L134.897 252.976c-2.483 4.44-8.862 4.466-11.382.048L.875 37.958c-2.746-4.814 1.371-10.646 6.827-9.67l120.385 21.517a6.537 6.537 0 0 0 2.322-.004l117.867-21.483c5.438-.991 9.574 4.796 6.877 9.62Z"
      />
      <path
        fill="url(#vb)"
        d="M185.432.063L96.44 17.501a3.268 3.268 0 0 0-2.634 3.014l-5.474 92.456a3.268 3.268 0 0 0 3.997 3.378l24.777-5.718c2.318-.535 4.413 1.507 3.936 3.838l-7.361 36.047c-.495 2.426 1.782 4.5 4.151 3.78l15.304-4.649c2.372-.72 4.652 1.36 4.15 3.788l-11.698 56.621c-.732 3.542 3.979 5.473 5.943 2.437l1.313-2.028l72.516-144.72c1.215-2.423-.88-5.186-3.54-4.672l-25.505 4.922c-2.396.462-4.435-1.77-3.759-4.114l16.646-57.705c.677-2.35-1.37-4.583-3.769-4.113Z"
      />
    </svg>
  );
}

function Slot({ children }: { children: ReactNode }) {
  return <div className="flex w-[72px] shrink-0 items-center justify-center">{children}</div>;
}

function Orbit() {
  return (
    <svg viewBox="0 0 32 32" className="size-8" fill="none" stroke="#c4c7c9" strokeWidth="1.6">
      <circle cx="16" cy="16" r="14.8" />
      <circle cx="16" cy="16" r="9.5" />
      <circle cx="16" cy="16" r="4.6" fill="#d0d0d0" stroke="none" />
      <circle cx="9" cy="3.3" r="3" fill="#8a8a8a" stroke="none" />
      <circle cx="22.5" cy="9.7" r="2.8" fill="#7c7674" stroke="none" />
    </svg>
  );
}

function OnePassword() {
  return (
    <svg viewBox="0 0 32 32" className="size-8">
      <circle cx="15.8" cy="16" r="15" fill="#fff" stroke="#262d33" strokeWidth="2" />
      <circle cx="15.8" cy="16" r="9.8" fill="#f2f2f2" stroke="#5ba2f5" strokeWidth="4" />
      <rect x="14" y="10" width="4" height="12" fill="#55585c" />
      <path d="M16 32V23l4-7q8-4 12 0v16z" fill="#fff" />
      <path d="M22 24v-2.5a4 4 0 0 1 8 0V24" fill="none" stroke="#262a2e" strokeWidth="2" />
      <rect x="20" y="23.5" width="12" height="8.5" rx="1.5" fill="#2c2e31" />
    </svg>
  );
}

function Mendeley() {
  return (
    <svg viewBox="0 0 96 96" className="size-8 bg-[#d8383a]" fill="#fff">
      <path d="M24 38q-3 14-8 22M72 38q3 14 8 22M40 44q6 8 8 16M56 44q-6 8-8 16" stroke="#fff" strokeWidth="5" fill="none" />
      <circle cx="34" cy="35" r="12" />
      <circle cx="62" cy="35" r="12" />
      <circle cx="48" cy="41" r="6.5" fill="#d8383a" />
      <circle cx="17" cy="61" r="7.5" />
      <circle cx="79" cy="61" r="7.5" />
      <circle cx="48" cy="61" r="7.5" />
    </svg>
  );
}

function AdBlock() {
  return (
    <svg viewBox="0 0 96 96" className="size-8">
      <path d="M28 0h40l28 28v40L68 96H28L0 68V28z" fill="#d42f25" />
      <path
        d="M27 48V27q0-4 3.5-4t3.5 4v18h2V18q0-4 4-4t4 4v26h2V15q0-4 3.500-4t3.500 4v29h2V20q0-4 3.500-4t3.500 4v34l6-10q3-4 6-2 2 2 0 6L64 74q-4 7-15 7-15 0-19-13-3-10-3-20z"
        fill="#fff"
      />
    </svg>
  );
}

function Puzzle() {
  return (
    <svg viewBox="936 68 114 114" className="size-[38px] translate-x-px">
      <path
        d="M958 88h64q8 0 8 8v60q0 8-8 8h-64q-7 0-7-8v-16q12-3 12-15t-12-15V96q0-8 7-8z"
        fill="none"
        stroke="#fff"
        strokeWidth="9"
        strokeLinejoin="round"
      />
      <path d="M976 86a13 14 0 0 1 27 0zM1032 111a13 14 0 0 1 0 28z" fill="#fff" />
    </svg>
  );
}

function EnergyLeaf() {
  return (
    <svg viewBox="1264 78 98 98" className="size-8" fill="none" stroke="#fff" strokeWidth="9" strokeLinejoin="round">
      <path d="M1353 88c-40-3-78 12-78 46 0 20 14 31 34 31 40 0 47-45 44-77zM1284 154l-11 12" />
      <path d="m1319 104-19 24h26l-17 24" strokeWidth="7" />
    </svg>
  );
}

function SidePanel() {
  return (
    <svg viewBox="0 0 28 28" className="size-7">
      <rect x="2" y="2" width="24" height="24" rx="2" fill="none" stroke="#fff" strokeWidth="3.6" />
      <path d="M15.5 2H26v24H15.5z" fill="#fff" />
    </svg>
  );
}

function Folder() {
  return (
    <svg viewBox="0 0 34 26" className="h-[26px] w-[34px]" fill="none" stroke="#c0c2c3" strokeWidth="2.8" strokeLinejoin="round">
      <path d="M1.8 4.5q0-2.7 2.7-2.7h8.3l4 4h12.7q2.7 0 2.7 2.7v13q0 2.7-2.7 2.7H4.5q-2.7 0-2.7-2.7z" />
    </svg>
  );
}

function Globe() {
  return (
    <svg viewBox="0 0 28 28" className="mx-0.5 size-7">
      <circle cx="14" cy="14" r="14" fill="#fff" />
      <path d="M13 3.5c4 .5 1 3-1 4s-1 3 1 3.5 5-.5 6 2 4 1 5 2c.5 5-3 8.500-6 9.500-1-2 1-4 0-5.500s-4-1-4.500-3.500c0-2-3-2-4-1s-4-1-6-1.500C3.500 8 7 4 13 3.500z" fill="#48565f" />
    </svg>
  );
}

function Diamond() {
  return (
    <svg viewBox="0 0 32 26" className="h-[26px] w-8">
      <path d="M6 1.5 16 0l10 1.5 6 7L16 26 0 8.5z" fill="#31c5ea" />
      <path d="M6 1.5 9 9l7-8.5L23 9l3-7.5 6 7L16 26 0 8.5z" fill="#7fe3f7" opacity=".6" />
      <path d="M9 9h14l-7 17z" fill="#b9f3fb" opacity=".75" />
      <path d="M23 9h9L16 26z" fill="#1aa3cf" opacity=".8" />
    </svg>
  );
}

function Bookmark({ width, icon, gap, track, children }: { width: string; icon: ReactNode; gap: string; track: string; children: string }) {
  return (
    <div className={`flex shrink-0 items-center whitespace-nowrap ${width} ${gap}`}>
      {icon}
      <span className={track}>{children}</span>
    </div>
  );
}

function TabStrip() {
  return (
    <div className="flex h-[79px] items-end">
      <div className="flex h-[68px] w-[184px] items-center gap-4 pb-[10px] pl-[42px]">
        <span className="size-6 rounded-full bg-[#ed6a5f]" />
        <span className="size-6 rounded-full bg-[#f5bf4f]" />
        <span className="size-6 rounded-full bg-[#62c655]" />
      </div>
      <div className="relative flex h-[68px] w-[464px] items-center rounded-t-[22px] bg-[#48565f] pb-3 pl-4">
        <svg viewBox="0 0 22 22" className="absolute bottom-0 -left-[22px] size-[22px]">
          <path d="M22 0v22H0Q22 22 22 0z" fill="#48565f" />
        </svg>
        <svg viewBox="0 0 22 22" className="absolute -right-[22px] bottom-0 size-[22px]">
          <path d="M0 0v22h22Q0 22 0 0z" fill="#48565f" />
        </svg>
        <ViteLogo />
        <span className="ml-4 text-[24px] tracking-[-0.008em]">Vessel Routing</span>
        <MdClose className="mr-[19px] ml-auto size-[27px]" />
      </div>
      <MdAdd className="mb-[22px] ml-[22px] size-9" />
      <div className="mr-3 mb-3 ml-auto flex size-14 items-center justify-center rounded-[20px] bg-[#48565f]">
        <svg viewBox="0 0 18 12" className="h-3 w-[18px]" fill="none" stroke="#fff" strokeWidth="3">
          <path d="m1.5 1.5 7.5 7.5 7.5-7.5" />
        </svg>
      </div>
    </div>
  );
}

function Toolbar() {
  return (
    <div className="flex h-[92px] items-center pl-2">
      <Slot><MdArrowBack className="size-[35px]" /></Slot>
      <Slot><MdArrowForward className="size-[35px] text-[#8f979c]" /></Slot>
      <Slot><MdRefresh className="size-[37px]" /></Slot>
      <div className="ml-[15px] flex h-[72px] w-[1341px] items-center rounded-full border-4 border-[#7fa9b9] bg-[#202124] pr-[27px] pl-[7px]">
        <span className="flex size-12 items-center justify-center rounded-full bg-[#48565f]">
          <svg viewBox="0 0 28 28" className="size-7" fill="none" stroke="#fff" strokeWidth="2.6">
            <circle cx="14" cy="14" r="12.4" />
            <path d="M14 12.5v8M14 7.5v3" />
          </svg>
        </span>
        <span className="ml-4 text-[28px] font-normal tracking-[0.003em]">
          localhost<span className="text-[#a9acaf]">:5173</span>
        </span>
        <MdStarOutline className="ml-auto size-[38px] text-[#c7c7c7]" />
      </div>
      <div className="ml-[14px] flex">
        <Slot><Orbit /></Slot>
        <Slot><OnePassword /></Slot>
        <Slot><Mendeley /></Slot>
        <Slot><AdBlock /></Slot>
        <Slot><Puzzle /></Slot>
      </div>
      <div className="flex w-9 justify-center"><span className="h-8 w-[3px] rounded-full bg-[#2f373f]" /></div>
      <div className="flex">
        <Slot><EnergyLeaf /></Slot>
        <Slot><MdQueueMusic className="size-[40px]" /></Slot>
        <Slot><SidePanel /></Slot>
        <Slot>
          <span className="flex size-10 items-center justify-center rounded-full bg-[#da4e7b] text-[22px] font-normal">S</span>
        </Slot>
      </div>
      <div className="ml-2 flex h-[68px] w-[318px] items-center rounded-full bg-[#2f373f] pl-6 text-[26px] tracking-[-0.004em] whitespace-nowrap">
        Relaunch to update
        <MdMoreVert className="ml-1 size-[40px] shrink-0" />
      </div>
    </div>
  );
}

function BookmarksBar() {
  return (
    <div className="flex h-14 items-center pl-[27px] text-[24px]">
      <Bookmark width="w-[196px]" gap="gap-[15px]" track="tracking-[-0.008em]" icon={<Folder />}>Tjek-sites</Bookmark>
      <Bookmark width="w-[132px]" gap="gap-[14px]" track="tracking-[-0.015em]" icon={<Folder />}>SQL</Bookmark>
      <Bookmark width="w-[147px]" gap="gap-[14px]" track="tracking-[-0.008em]" icon={<Folder />}>React</Bookmark>
      <Bookmark
        width="w-[300px]"
        gap="gap-[12px]"
        track="tracking-[-0.015em]"
        icon={<span className="flex size-8 items-center justify-center bg-[#4147d5] pb-0.5 text-[13px] font-normal tracking-tight">hub</span>}
      >
        The Hub | Full-Sta...
      </Bookmark>
      <Bookmark width="w-[302px]" gap="gap-[12px]" track="tracking-[-0.005em]" icon={<Globe />}>Still in Play – Forla...</Bookmark>
      <Bookmark width="w-[287px]" gap="gap-[12px]" track="tracking-[-0.009em]" icon={<Diamond />}>The Implicit ‘Any’...</Bookmark>
      <Bookmark
        width="w-[298px]"
        gap="gap-[12px]"
        track="tracking-[-0.013em]"
        icon={
          <span className="flex size-8 flex-col justify-center overflow-hidden bg-[#34557d] pl-px leading-none">
            <span className="flex items-baseline text-[13px] font-bold tracking-tight">
              ofir<span className="text-[7px] font-normal">.dk</span>
            </span>
            <span className="pl-3 text-[4px]">gør jobbet</span>
          </span>
        }
      >
        SMK søger en full...
      </Bookmark>
      <Bookmark
        width="w-[280px]"
        gap="gap-[12px]"
        track="tracking-[-0.02em]"
        icon={
          <span className="flex h-[18px] w-8 -skew-x-6 items-center justify-center bg-[#0d2b2e] text-[14px] leading-none font-normal italic">
            ed<b className="text-[17px]">x</b>
          </span>
        }
      >
        MITx: Introduction...
      </Bookmark>
      <div className="mr-[29px] ml-auto flex items-center">
        <svg viewBox="0 0 20 18" className="h-[18px] w-5" fill="none" stroke="#fff" strokeWidth="3">
          <path d="m1.5 1.5 7 7.5-7 7.5M10.5 1.5l7 7.5-7 7.5" />
        </svg>
        <span className="mr-[31px] ml-[35px] h-8 w-[3px] rounded-full bg-[#2f373f]" />
        <Folder />
        <span className="ml-[15px] tracking-[-0.015em]">All Bookmarks</span>
      </div>
    </div>
  );
}

/* ----------------------------------------------------------------- page */

function RoutingForm() {
  return (
    <section className="flex w-[1090px] shrink-0 flex-col border-y-2 border-r-2 border-gray-200 px-[66px] pt-[66px] text-[31px] leading-[48px]">
      <h1 className="text-center text-[46.5px] leading-[64px] tracking-[-0.03em]">Vessel Routing</h1>
      <p className="mt-[79px] tracking-[-0.005em] whitespace-nowrap">
        Vessel routing is a routing tool that enables users to select a ship
        <br />
        and a destination port and find the optimal sea route. When
        <br />
        <span className="tracking-[-0.008em]">locations are selected in the below dropdown it will display your</span>
        <br />
        selection on the map along with the optimal sea route and
        <br />
        <span className="tracking-[-0.004em]">estimated travel times between the selected locations.</span>
      </p>
      <p className="mt-6 tracking-[-0.005em] whitespace-nowrap">Make your selection from the dropdown to get started:</p>
      <div className="mt-[63px] ml-[143px] flex">
        <button className="h-[100px] w-80 rounded-lg border-2 border-gray-200 bg-white pt-0.5 tracking-[-0.012em] shadow">CV Penelope</button>
        <button className="h-[100px] w-80 rounded-lg border-2 border-gray-200 bg-white pt-0.5 tracking-[-0.014em] shadow">Bonny</button>
      </div>
      <button className="mt-4 ml-[159px] h-[100px] w-[640px] border-2 border-[#3a7d44] bg-[#6fa5f3] pt-0.5 tracking-[-0.002em]">Request route</button>
    </section>
  );
}

function InfoBox({ children }: { children: ReactNode }) {
  return <div className="mx-2 mt-2 border-2 border-gray-200 bg-[#dee9fb] pt-[17px] pb-[15px] text-center text-[31px] leading-[48px]">{children}</div>;
}

function MapPanel() {
  return (
    <section className="flex w-[1526px] flex-col">
      <div className="relative overflow-hidden">
        <WorldMap />
        <div className="absolute top-5 left-5 flex h-32 w-[68px] flex-col rounded-[10px] border-4 border-black/20 bg-white bg-clip-padding">
          <button className="flex flex-1 items-center justify-center border-b-2 border-[#ccc] pt-2 pl-0.5">
            <svg viewBox="0 0 24 24" className="size-6"><path d="M9.5 0h5v24h-5zM0 9.5h24v5H0z" /></svg>
          </button>
          <button className="flex flex-1 items-center justify-center pt-2 pl-0.5">
            <svg viewBox="0 0 24 24" className="size-6"><path d="M0 9.5h24v5H0z" /></svg>
          </button>
        </div>
        <div className="absolute right-0 bottom-0 flex h-[34px] w-[123px] items-center bg-white/80 pl-[10px]">
          <svg viewBox="0 0 24 16" className="h-4 w-6">
            <path d="M0 0h24v8H0z" fill="#4c7be1" />
            <path d="M0 8h24v6H0z" fill="#ffd500" opacity=".8" />
            <path d="M0 14h24v2H0z" fill="#e0bc00" opacity=".8" />
          </svg>
          <span className="ml-[7px] font-['Liberation_Sans',sans-serif] text-[24px] leading-[34px] text-[#3279a6]">Leaflet</span>
        </div>
      </div>
      <InfoBox>
        <div className="tracking-[-0.008em]">Position of CV Penelope is:</div>
        <div className="tracking-[-0.003em]">latitude: 26.3 - longitude: 52.22</div>
      </InfoBox>
      <InfoBox>
        <div className="tracking-[-0.005em]">Destination is Bonny:</div>
        <div className="tracking-[0.001em]">latitude: 4.42 - longitude: 7.13</div>
      </InfoBox>
      <InfoBox>
        <div className="tracking-[0.003em]">Estimated travel time is 13d 12h 15m 51s</div>
      </InfoBox>
    </section>
  );
}

export default function App() {
  return (
    <div className="h-[1744px] w-[2840px] overflow-hidden bg-white pt-[76px] pl-28 font-['Inter',sans-serif] text-black">
      <div className="flex h-[1520px] w-[2616px] flex-col overflow-hidden rounded-[20px] bg-white shadow-[0_0_0_1px_rgba(0,0,0,0.25),0_36px_70px_rgba(0,0,0,0.4)]">
        <header className="shrink-0 border-t border-[#7c8186] bg-[#2f373f] font-[450] text-white">
          <TabStrip />
          <div className="rounded-t-2xl border-b-2 border-[#707b82] bg-[#48565f] pb-3">
            <Toolbar />
            <BookmarksBar />
          </div>
        </header>
        <main className="flex min-h-0 flex-1">
          <RoutingForm />
          <MapPanel />
        </main>
      </div>
    </div>
  );
}
